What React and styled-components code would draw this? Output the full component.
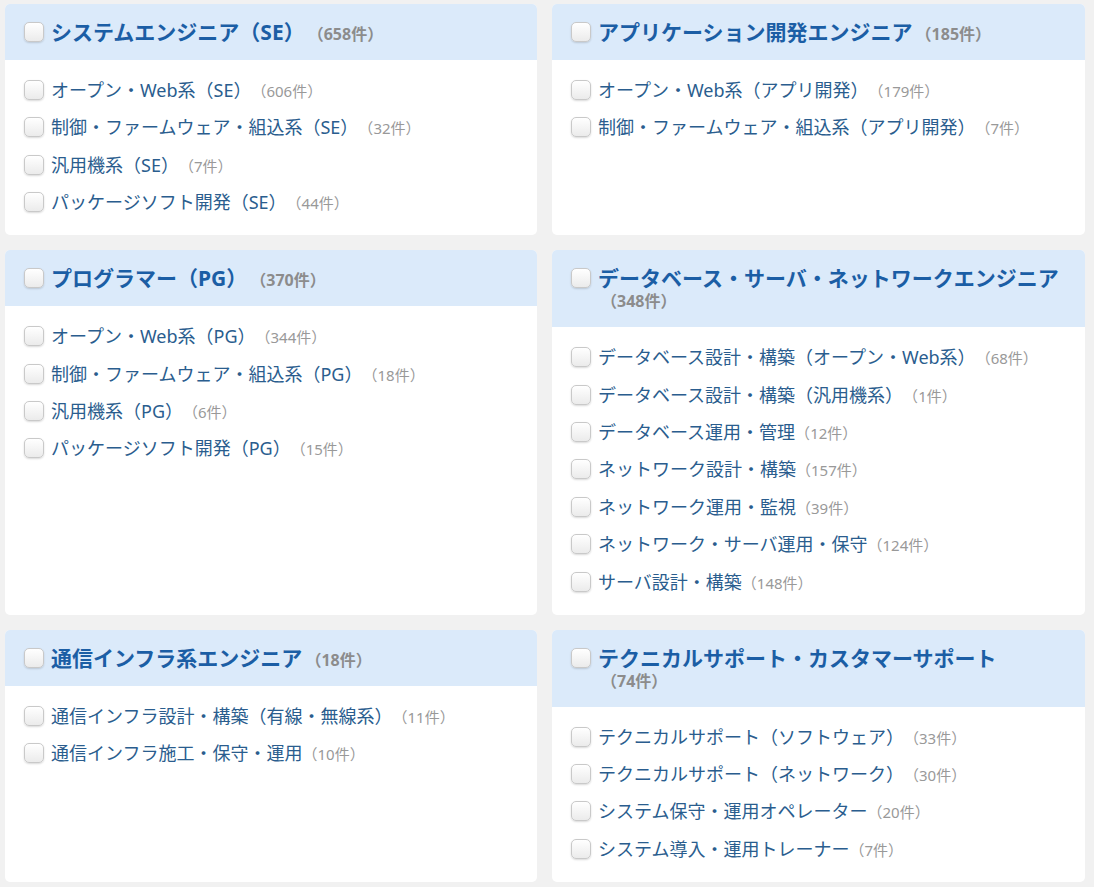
import React from "react";
import styled, { createGlobalStyle } from "styled-components";

const GlobalStyle = createGlobalStyle`
  body {
    margin: 0;
    background: #f1f1f1;
    font-family: "Noto Sans", "Noto Sans CJK JP", sans-serif;
    text-spacing-trim: space-all;
  }
`;

const categories = [
  {
    title: "システムエンジニア（SE）",
    count: 658,
    items: [
      ["オープン・Web系（SE）", 606],
      ["制御・ファームウェア・組込系（SE）", 32],
      ["汎用機系（SE）", 7],
      ["パッケージソフト開発（SE）", 44],
    ],
  },
  {
    title: "アプリケーション開発エンジニア",
    count: 185,
    items: [
      ["オープン・Web系（アプリ開発）", 179],
      ["制御・ファームウェア・組込系（アプリ開発）", 7],
    ],
  },
  {
    title: "プログラマー（PG）",
    count: 370,
    items: [
      ["オープン・Web系（PG）", 344],
      ["制御・ファームウェア・組込系（PG）", 18],
      ["汎用機系（PG）", 6],
      ["パッケージソフト開発（PG）", 15],
    ],
  },
  {
    title: "データベース・サーバ・ネットワークエンジニア",
    count: 348,
    items: [
      ["データベース設計・構築（オープン・Web系）", 68],
      ["データベース設計・構築（汎用機系）", 1],
      ["データベース運用・管理", 12],
      ["ネットワーク設計・構築", 157],
      ["ネットワーク運用・監視", 39],
      ["ネットワーク・サーバ運用・保守", 124],
      ["サーバ設計・構築", 148],
    ],
  },
  {
    title: "通信インフラ系エンジニア",
    count: 18,
    items: [
      ["通信インフラ設計・構築（有線・無線系）", 11],
      ["通信インフラ施工・保守・運用", 10],
    ],
  },
  {
    title: "テクニカルサポート・カスタマーサポート",
    count: 74,
    items: [
      ["テクニカルサポート（ソフトウェア）", 33],
      ["テクニカルサポート（ネットワーク）", 30],
      ["システム保守・運用オペレーター", 20],
      ["システム導入・運用トレーナー", 7],
    ],
  },
];

export default function App() {
  return (
    <>
      <GlobalStyle />
      <Grid>
        {categories.map((cat) => (
          <Card key={cat.title}>
            <Header>
              <Check />
              <HeadText>
                <Title>{cat.title}</Title>
                <HeadCount>（{cat.count}件）</HeadCount>
              </HeadText>
            </Header>
            <List>
              {cat.items.map(([label, n]) => (
                <Item key={label}>
                  <Check />
                  <Label>
                    {label}
                    <Count>（{n}件）</Count>
                  </Label>
                </Item>
              ))}
            </List>
          </Card>
        ))}
      </Grid>
    </>
  );
}

const Grid = styled.div`
  display: grid;
  grid-template-columns: 532px 533px;
  column-gap: 15px;
  row-gap: 15px;
  padding: 4px 9px 5px 5px;
`;

const Card = styled.div`
  background: #fff;
  border-radius: 5px;
  overflow: hidden;
  display: flex;
  flex-direction: column;
`;

const Header = styled.div`
  background: #dbeafa;
  display: flex;
  align-items: flex-start;
  gap: 7px;
  padding: 16px 22px 15px 19px;
`;

const HeadText = styled.div`
  font-size: 14px;
  line-height: 20px;
`;

const Title = styled.span`
  font-size: 21px;
  line-height: 24px;
  font-weight: 700;
  color: #1b5ea5;
`;

const HeadCount = styled.span`
  display: inline-block;
  font-size: 16px;
  font-weight: 700;
  color: #8c8c8c;
  margin-left: 3px;
`;

const Check = styled.span`
  flex: 0 0 auto;
  width: 20px;
  height: 20px;
  margin-top: 2px;
  box-sizing: border-box;
  border: 1px solid #c9c9c9;
  border-radius: 5px;
  background: linear-gradient(#ffffff, #ebebeb);
  box-shadow: 0 1px 2px rgba(0, 0, 0, 0.15);
`;

const List = styled.div`
  display: flex;
  flex-direction: column;
  gap: 13.4px;
  padding: 18px 19px 21px;
`;

const Item = styled.div`
  display: flex;
  align-items: flex-start;
  gap: 7px;
  height: 24px;
`;

const Label = styled.span`
  font-size: 18px;
  line-height: 24px;
  color: #2a5d8e;
  white-space: nowrap;
`;

const Count = styled.span`
  font-size: 15px;
  line-height: 1;
  color: #999;
`;
